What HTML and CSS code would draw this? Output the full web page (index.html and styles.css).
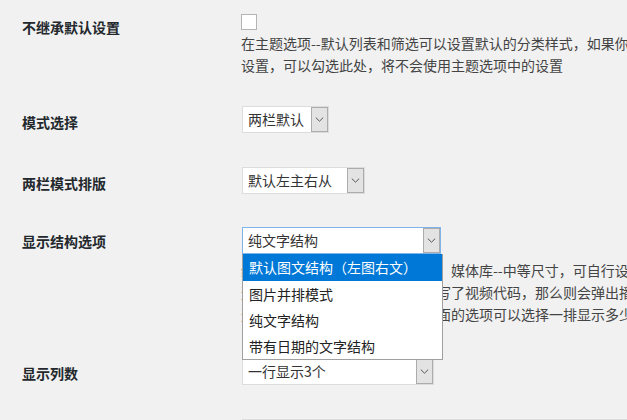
FILE: index.html
```html
<!DOCTYPE html>
<html lang="zh-CN">
<head>
<meta charset="utf-8">
<title>分类设置</title>
<link rel="stylesheet" href="styles.css">
</head>
<body>
<div class="form">
  <div class="row row-inherit">
    <div class="label label-top">不继承默认设置</div>
    <div class="field">
      <span class="checkbox"></span>
      <p class="desc">在主题选项--默认列表和筛选可以设置默认的分类样式，如果你想要单独设置本分类的样式，不使用默认<br>设置，可以勾选此处，将不会使用主题选项中的设置</p>
    </div>
  </div>

  <div class="row row-mode">
    <div class="label">模式选择</div>
    <div class="field">
      <div class="select select-w1"><span class="select-value">两栏默认</span><span class="select-arrow"><svg width="9" height="5" viewBox="0 0 9 5"><polyline points="0.8,0.6 4.5,4.2 8.2,0.6" fill="none" stroke="#555" stroke-width="1"/></svg></span></div>
    </div>
  </div>

  <div class="row row-layout">
    <div class="label">两栏模式排版</div>
    <div class="field">
      <div class="select select-w2"><span class="select-value">默认左主右从</span><span class="select-arrow"><svg width="9" height="5" viewBox="0 0 9 5"><polyline points="0.8,0.6 4.5,4.2 8.2,0.6" fill="none" stroke="#555" stroke-width="1"/></svg></span></div>
    </div>
  </div>

  <div class="row row-struct">
    <div class="label label-struct">显示结构选项</div>
    <div class="field">
      <div class="select-wrap">
        <div class="select select-w3 is-open"><span class="select-value">纯文字结构</span><span class="select-arrow"><svg width="9" height="5" viewBox="0 0 9 5"><polyline points="0.8,0.6 4.5,4.2 8.2,0.6" fill="none" stroke="#555" stroke-width="1"/></svg></span></div>
        <ul class="dropdown">
          <li class="option option-active">默认图文结构（左图右文）</li>
          <li class="option">图片并排模式</li>
          <li class="option">纯文字结构</li>
          <li class="option">带有日期的文字结构</li>
        </ul>
      </div>
      <p class="desc desc-struct">缩略图默认调用的是后台设置里　媒体库--中等尺寸，可自行设置<br>选择图片并排模式时如果文章填写了视频代码，那么则会弹出播放器<br>选择图片并排模式时，可通过下面的选项可以选择一排显示多少个</p>
    </div>
  </div>

  <div class="row row-cols">
    <div class="label">显示列数</div>
    <div class="field">
      <div class="select select-w4"><span class="select-value">一行显示3个</span><span class="select-arrow"><svg width="9" height="5" viewBox="0 0 9 5"><polyline points="0.8,0.6 4.5,4.2 8.2,0.6" fill="none" stroke="#555" stroke-width="1"/></svg></span></div>
    </div>
  </div>

  <div class="row row-next">
    <div class="label">显示文章数</div>
    <div class="field">
      <div class="select select-w5"><span class="select-value">默认</span><span class="select-arrow"></span></div>
    </div>
  </div>
</div>
</body>
</html>
```

FILE: styles.css
```css
html, body {
  margin: 0;
  padding: 0;
  overflow: hidden;
  background: #f1f1f1;
}

body {
  width: 627px;
  height: 420px;
  font-family: "Noto Sans", "Noto Sans CJK SC", sans-serif;
  font-size: 14px;
  color: #444;
}

.form {
  padding-left: 22px;
}

.row {
  display: grid;
  grid-template-columns: 219px auto;
  align-items: start;
}

.row-inherit { padding-top: 14px; }
.row-mode { margin-top: 30px; }
.row-layout { margin-top: 34px; }
.row-struct { margin-top: 33px; }
.row-cols { margin-top: 33px; }
.row-next { margin-top: 34px; }

.label {
  font-family: "Noto Sans CJK SC", sans-serif;
  font-weight: 700;
  color: #23282d;
  line-height: 20px;
  padding-top: 6px;
  white-space: nowrap;
}

.label-top { padding-top: 3px; }
.label-struct { padding-top: 4px; }
.row-cols .label { padding-top: 5px; }

.field {
  min-width: 0;
}

.checkbox {
  display: block;
  width: 16px;
  height: 16px;
  box-sizing: border-box;
  border: 1px solid #b4b4b4;
  background: #fff;
}

.desc {
  margin: 2px 0 0 0;
  line-height: 22px;
  white-space: nowrap;
  color: #444;
  font-family: "Noto Sans CJK SC", sans-serif;
}

.desc-struct {
  margin-top: 5px;
}

.select-wrap {
  position: relative;
  width: 201px;
  margin-left: 1px;
}

.select {
  display: flex;
  align-items: stretch;
  height: 27px;
  box-sizing: border-box;
  border: 1px solid #dcdcdc;
  background: #fff;
  margin-left: 1px;
  color: #333;
}

.select-wrap .select { margin-left: 0; }

.select-w1 { width: 87px; }
.select-w2 { width: 123px; }
.select-w3 { width: 199px; }
.select-w4 { width: 192px; }
.select-w5 { width: 420px; }

.select.is-open {
  border-color: #7eb4ea;
}

.select-value {
  flex: 1;
  padding-left: 5px;
  line-height: 25px;
  white-space: nowrap;
  font-family: "Noto Sans CJK SC", sans-serif;
}

.select-arrow {
  width: 17px;
  box-sizing: border-box;
  border: 1px solid #acacac;
  background: #e3e3e3;
  display: flex;
  align-items: center;
  justify-content: center;
}

.select-arrow svg {
  display: block;
  margin-top: -1px;
}

.dropdown {
  position: absolute;
  top: 100%;
  left: 0;
  z-index: 10;
  width: 201px;
  box-sizing: border-box;
  margin: 0;
  padding: 0;
  list-style: none;
  background: #fff;
  border: 1px solid #a0a0a0;
  border-top: none;
}

.option {
  height: 26px;
  line-height: 26px;
  padding-left: 6px;
  color: #222;
  white-space: nowrap;
  font-family: "Noto Sans CJK SC", sans-serif;
}

.option-active {
  background: #0078d7;
  color: #fff;
  height: 27px;
  line-height: 27px;
}
```
